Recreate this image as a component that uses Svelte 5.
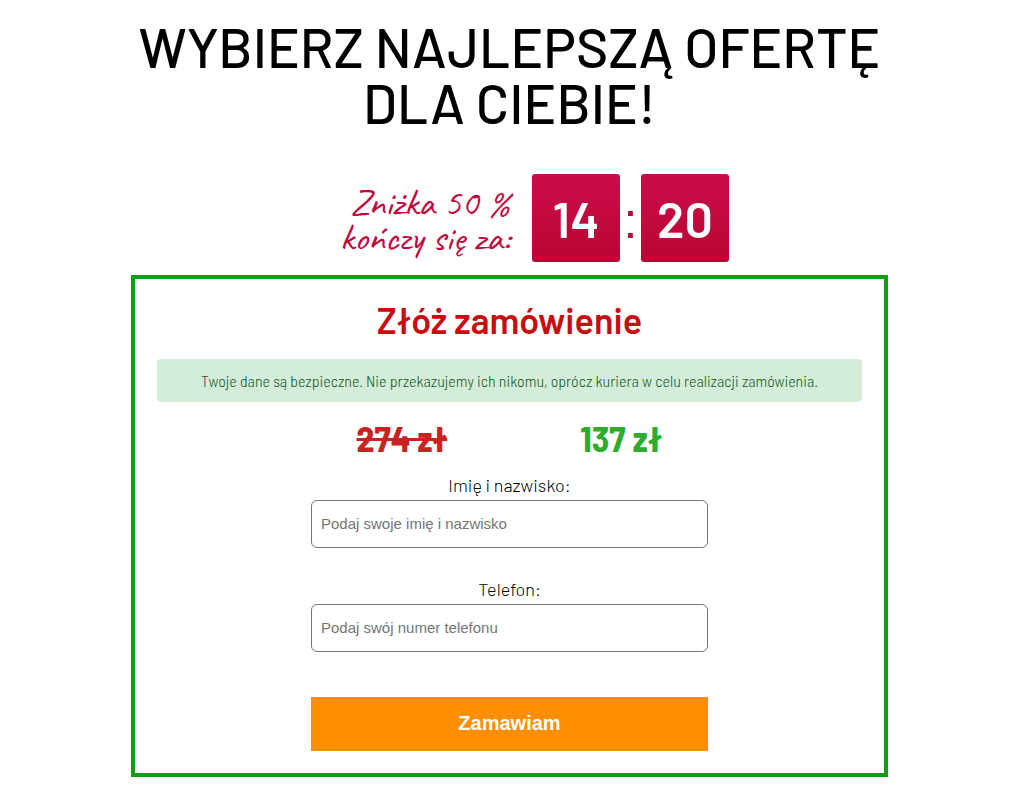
<script>
    let name = $state('');
    let phone = $state('');
    let minutes = $state(14);
    let seconds = $state(20);

    function order(e) {
        e.preventDefault();
    }
</script>

<main>
    <h1>Wybierz najlepszą ofertę dla Ciebie!</h1>

    <div class="timer">
        <p class="timer-label">Zniżka 50 %<br />kończy się za:</p>
        <div class="clock">
            <span class="digits">{minutes}</span>
            <span class="colon">:</span>
            <span class="digits">{seconds}</span>
        </div>
    </div>

    <section class="order">
        <h2>Złóż zamówienie</h2>
        <p class="notice">Twoje dane są bezpieczne. Nie przekazujemy ich nikomu, oprócz kuriera w celu realizacji zamówienia.</p>

        <div class="prices">
            <s class="old">274 zł</s>
            <span class="new">137 zł</span>
        </div>

        <form onsubmit={order}>
            <label for="name">Imię i nazwisko:</label>
            <input id="name" type="text" placeholder="Podaj swoje imię i nazwisko" bind:value={name} />

            <label for="phone">Telefon:</label>
            <input id="phone" type="tel" placeholder="Podaj swój numer telefonu" bind:value={phone} />

            <button type="submit">Zamawiam</button>
        </form>
    </section>
</main>

<style>
    :global(body) {
        background: #fff;
    }

    main {
        box-sizing: border-box;
        max-width: 764px;
        margin: 0 auto;
        padding: 18px 0 16px 7px;
        font-family: Barlow, Roboto, sans-serif;
        color: #000;
        text-align: center;
    }

    h1 {
        margin: 0;
        font-size: 55px;
        line-height: 56px;
        font-weight: 500;
        text-transform: uppercase;
    }

    .timer {
        display: flex;
        align-items: center;
        justify-content: center;
        gap: 22px;
        margin: 44px 0 13px 50px;
        color: #c0093f;
    }

    .timer-label {
        margin: 0;
        padding-top: 4px;
        font-family: Caveat, Lato, cursive;
        font-size: 38px;
        line-height: 35px;
        text-align: right;
    }

    .clock {
        display: flex;
        align-items: baseline;
    }

    .digits {
        width: 88px;
        border-radius: 3px;
        background: linear-gradient(#ca0c4a, #bb0533);
        color: #fff;
        font-size: 50px;
        line-height: 88px;
        font-weight: 600;
    }

    .colon {
        width: 21px;
        font-family: "Liberation Sans", Arial, sans-serif;
        font-size: 50px;
        line-height: 50px;
    }

    .order {
        padding: 22px;
        border: 4px solid #139d13;
    }

    h2 {
        margin: 0 0 20px;
        font-size: 36px;
        line-height: 38px;
        font-weight: 600;
        color: #c70d0f;
    }

    .notice {
        margin: 0;
        padding: 12px;
        border-radius: 4px;
        background: #d4edda;
        color: #155724;
        font-family: "Barlow Semi Condensed", Barlow, Roboto, sans-serif;
        font-size: 16px;
        line-height: 19px;
        font-weight: 300;
    }

    .prices {
        display: flex;
        justify-content: center;
        gap: 133px;
        margin: 16px 0 15px;
        font-size: 36px;
        line-height: 40px;
        font-family: "Barlow Semi Condensed", Barlow, Roboto, sans-serif;
        font-weight: 700;
    }

    .old {
        color: #ca2222;
    }

    .new {
        color: #2dac2d;
    }

    form {
        display: flex;
        flex-direction: column;
        width: 397px;
        max-width: 100%;
        margin: 0 auto;
    }

    label {
        padding-bottom: 3px;
        font-size: 18px;
        line-height: 24px;
        font-weight: 300;
    }

    input {
        box-sizing: border-box;
        height: 48px;
        margin: 0 0 29px;
        padding: 0 9px 2px;
        border: 1px solid #767676;
        border-radius: 6px;
        background: #fff;
        font-family: "Liberation Sans", Arial, sans-serif;
        font-size: 15px;
    }

    input::placeholder {
        color: #757575;
    }

    button {
        height: 54px;
        margin-top: 16px;
        padding: 0 0 2px;
        border: 0;
        background: #ff8f00;
        color: #fff;
        font-family: "Liberation Sans", Arial, sans-serif;
        font-size: 20px;
        font-weight: 700;
        cursor: pointer;
    }
</style>
